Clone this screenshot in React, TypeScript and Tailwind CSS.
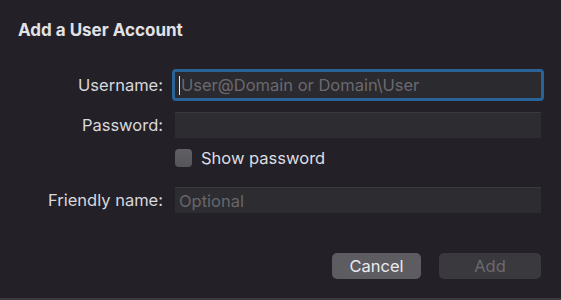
const font = { fontFamily: 'Inter, "Liberation Sans", Arial, sans-serif' };

const Label = ({ children }: { children: string }) => (
  <div className="w-[145px] shrink-0 text-right text-[16.5px] leading-[20px] text-[#d9d8dc]">{children}</div>
);

export default function App() {
  return (
    <div style={font} className="relative flex h-[300px] w-[561px] flex-col bg-[#232127] pl-[18px] pr-[20px] pt-[19px]">
      <div className="h-[22px] text-[17px] font-bold leading-[22px] text-[#e2e1e5]">Add a User Account</div>

      <div className="mt-[31px] flex h-[26px] items-center">
        <Label>Username:</Label>
        <div className="ml-[12px] flex h-[26px] w-[366px] items-center rounded-[1px] bg-[#2b2a2f] pl-[4px] outline outline-[3px] outline-[#2a6398]">
          <span className="mr-[1px] h-[19px] w-[1px] bg-[#e6e6e6]" />
          <span className="text-[16.5px] leading-[20px] text-[#6a696e]">User@Domain or Domain\User</span>
        </div>
      </div>

      <div className="mt-[14px] flex h-[26px] items-center">
        <Label>Password:</Label>
        <div className="ml-[12px] h-[26px] w-[366px] border-t border-[#3a393e] bg-[#2d2c31]" />
      </div>

      <div className="mt-[10px] flex h-[19px] items-center">
        <div className="w-[157px] shrink-0" />
        <div className="h-[18px] w-[17px] rounded-[4px] bg-gradient-to-b from-[#606064] to-[#55555a]" />
        <span className="ml-[9px] text-[16.5px] leading-[20px] text-[#dedde1]">Show password</span>
      </div>

      <div className="mt-[20px] flex h-[26px] items-center">
        <Label>Friendly name:</Label>
        <div className="ml-[12px] flex h-[26px] w-[366px] items-center border-t border-[#3a393e] bg-[#2d2c31] pl-[4px]">
          <span className="text-[16.5px] leading-[20px] text-[#67666b]">Optional</span>
        </div>
      </div>

      <div className="mt-[40px] flex justify-end gap-[18px]">
        <button className="h-[26px] w-[89px] rounded-[5px] bg-[#5d5c61] text-[16.5px] leading-[20px] text-[#ebeaee]">Cancel</button>
        <button className="h-[26px] w-[102px] rounded-[5px] bg-[#3a393e] text-[16.5px] leading-[20px] text-[#6b6a6f]">Add</button>
      </div>

      <div className="absolute bottom-0 left-0 h-[2px] w-full bg-[#3b3a3f]" />
    </div>
  );
}
